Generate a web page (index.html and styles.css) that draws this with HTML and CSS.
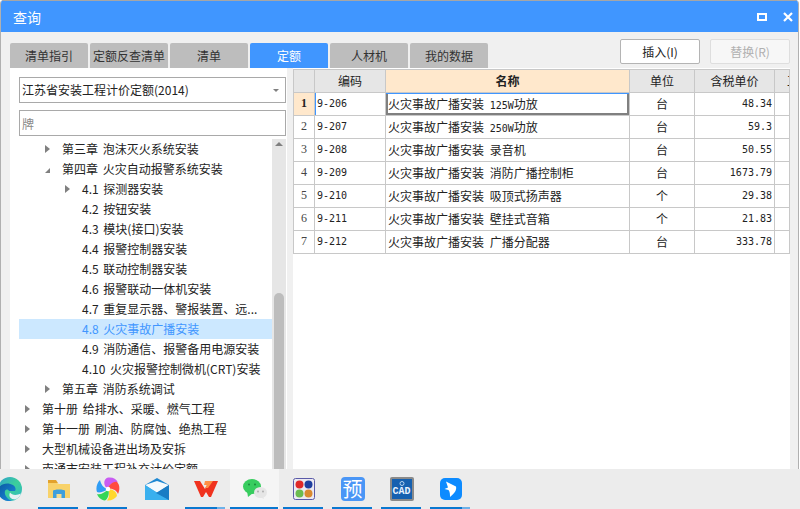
FILE: index.html
```html
<!DOCTYPE html>
<html lang="zh">
<head>
<meta charset="utf-8">
<title>查询</title>
<link rel="stylesheet" href="styles.css">
</head>
<body>
<div class="app">
  <div class="window">
    <header class="titlebar">
      <span class="title">查询</span>
      <div class="winbtns">
        <svg width="10" height="10" viewBox="0 0 10 10"><rect x="1" y="2" width="8" height="6" fill="none" stroke="#fff" stroke-width="2"/></svg>
        <svg width="10" height="10" viewBox="0 0 10 10"><path d="M1 1L9 9M9 1L1 9" stroke="#fff" stroke-width="2.200"/></svg>
      </div>
    </header>
    <main class="content">
      <div class="toprow">
        <nav class="tabs">
          <span class="tab">清单指引</span>
          <span class="tab">定额反查清单</span>
          <span class="tab">清单</span>
          <span class="tab active">定额</span>
          <span class="tab">人材机</span>
          <span class="tab">我的数据</span>
        </nav>
        <div class="actions">
          <button class="btn">插入(I)</button>
          <button class="btn disabled">替换(R)</button>
        </div>
      </div>
      <div class="panels">
        <section class="left">
          <div class="select"><span>江苏省安装工程计价定额(2014)</span><i class="caret"></i></div>
          <div class="search">牌</div>
          <div class="treewrap">
            <ul class="tree">
              <li class="l2"><i class="arr"></i>第三章 泡沫灭火系统安装</li>
              <li class="l2"><i class="arr open"></i>第四章 火灾自动报警系统安装</li>
              <li class="l3"><i class="arr"></i>4.1 探测器安装</li>
              <li class="l3">4.2 按钮安装</li>
              <li class="l3">4.3 模块(接口)安装</li>
              <li class="l3">4.4 报警控制器安装</li>
              <li class="l3">4.5 联动控制器安装</li>
              <li class="l3">4.6 报警联动一体机安装</li>
              <li class="l3">4.7 重复显示器、警报装置、远...</li>
              <li class="l3 sel">4.8 火灾事故广播安装</li>
              <li class="l3">4.9 消防通信、报警备用电源安装</li>
              <li class="l3">4.10 火灾报警控制微机(CRT)安装</li>
              <li class="l2"><i class="arr"></i>第五章 消防系统调试</li>
              <li class="l1"><i class="arr"></i>第十册 给排水、采暖、燃气工程</li>
              <li class="l1"><i class="arr"></i>第十一册 刷油、防腐蚀、绝热工程</li>
              <li class="l1"><i class="arr"></i>大型机械设备进出场及安拆</li>
              <li class="l1"><i class="arr"></i>南通市安装工程补充计价定额</li>
            </ul>
            <div class="scrollbar"><i class="up"></i><div class="thumb"></div></div>
          </div>
        </section>
        <section class="grid">
          <table>
            <colgroup><col class="c0"><col class="c1"><col class="c2"><col class="c3"><col class="c4"><col class="c5"></colgroup>
            <thead><tr><th></th><th>编码</th><th class="hl">名称</th><th>单位</th><th>含税单价</th><th class="cut">工</th></tr></thead>
            <tbody>
              <tr><td class="num cur">1</td><td class="code first">9-206</td><td class="name focus">火灾事故广播安装 <b>125W</b>功放</td><td class="unit">台</td><td class="price">48.34</td><td></td></tr>
              <tr><td class="num">2</td><td class="code">9-207</td><td class="name">火灾事故广播安装 <b>250W</b>功放</td><td class="unit">台</td><td class="price">59.3</td><td></td></tr>
              <tr><td class="num">3</td><td class="code">9-208</td><td class="name">火灾事故广播安装 录音机</td><td class="unit">台</td><td class="price">50.55</td><td></td></tr>
              <tr><td class="num">4</td><td class="code">9-209</td><td class="name">火灾事故广播安装 消防广播控制柜</td><td class="unit">台</td><td class="price">1673.79</td><td></td></tr>
              <tr><td class="num">5</td><td class="code">9-210</td><td class="name">火灾事故广播安装 吸顶式扬声器</td><td class="unit">个</td><td class="price">29.38</td><td></td></tr>
              <tr><td class="num">6</td><td class="code">9-211</td><td class="name">火灾事故广播安装 壁挂式音箱</td><td class="unit">个</td><td class="price">21.83</td><td></td></tr>
              <tr><td class="num">7</td><td class="code">9-212</td><td class="name">火灾事故广播安装 广播分配器</td><td class="unit">台</td><td class="price">333.78</td><td></td></tr>
            </tbody>
          </table>
        </section>
      </div>
    </main>
  </div>
  <footer class="taskbar">
    <div class="tb">
      <svg width="24" height="24" viewBox="0 0 24 24"><defs><linearGradient id="e1" x1="0" y1="0" x2="1" y2="1"><stop offset="0" stop-color="#2f9fd0"/><stop offset=".5" stop-color="#3ccf9a"/><stop offset="1" stop-color="#2fb5c8"/></linearGradient><linearGradient id="e2" x1="0" y1="0" x2="1" y2="1"><stop offset="0" stop-color="#0a5aa0"/><stop offset="1" stop-color="#1c8ae0"/></linearGradient></defs><circle cx="12" cy="12" r="12" fill="url(#e1)"/><path d="M0 13C2 6 10 5 15 8c3 2 3 5 2 6h-6c-1-2-3-2-4 0-1 4 2 8 7 10C5 25 0 20 0 13Z" fill="url(#e2)"/><path d="M12 15.500c2 3 7 3 11 1-1 3-3 5-6 6-4 0-7-3-5-7Z" fill="#e6f0f4"/></svg>
    </div>
    <div class="tb run">
      <svg width="22" height="18" viewBox="0 0 22 18"><path d="M0 3h9l2 1h11v14H0Z" fill="#f8d26a"/><path d="M0 0h8l2 3H0Z" fill="#e2a22c"/><path d="M5 11c0-2 12-2 12 0v7H5Z" fill="#3f9fdc"/><rect x="8.500" y="14" width="5" height="4" fill="#f8dc90"/></svg>
    </div>
    <div class="tb run">
      <svg width="24" height="24" viewBox="0 0 24 24"><g><path d="M12 12C7 9 7 2 12 .5c5-.5 8 1 10 5-4-1-8 1-10 6.500Z" fill="#c85cf2"/><path d="M12 12C13 7 18 4 21 5c3 3 3 8 1 12-1-3-5-6-10-5Z" fill="#ff4b3e"/><path d="M12 12c5 0 9 3 9 7-2 3-6 5-10 4.500 2-2 3-7 1-11.500Z" fill="#ffd72e"/><path d="M12 12c2 4 0 10-3 11.500C5 23 2 20 1 17c3 1 8-1 11-5Z" fill="#35d657"/><path d="M12 12C8 15 3 16 1 15-.5 11 1 6 4 3c1 4 3 8 8 9Z" fill="#2f9df5"/></g><circle cx="12" cy="12" r="2.300" fill="#fff"/></svg>
    </div>
    <div class="tb">
      <svg width="24" height="22" viewBox="0 0 24 22"><path d="M0 7L12 0l12 7v15H0Z" fill="#1e88d2"/><path d="M0 7l12 8L24 7 12 3Z" fill="#f4fafd"/><path d="M0 7v15h24Z" fill="#3ab0ee"/><path d="M24 7v15L11 15Z" fill="#1a7cc4"/></svg>
    </div>
    <div class="tb run split">
      <svg width="24" height="16" viewBox="0 0 24 16"><path d="M0 0h6l5 8L15 0h9l-7 16h-2l-3-5-3 5H7Z" fill="#f0321e"/><path d="M11 0h8l-5 7h-3l2-3h-3Z" fill="#ff8f45"/></svg>
    </div>
    <div class="tb run active">
      <svg width="24" height="20" viewBox="0 0 24 20"><ellipse cx="9" cy="7.500" rx="9" ry="7.500" fill="#38cd5f"/><path d="M4 12l1 6 5-4Z" fill="#38cd5f"/><circle cx="6" cy="5.500" r="1" fill="#1c8a3c"/><circle cx="12" cy="5.500" r="1" fill="#1c8a3c"/><ellipse cx="17.500" cy="13.500" rx="6.500" ry="5.500" fill="#e6e6e6"/><path d="M20 17l1 3-4-2Z" fill="#e6e6e6"/><circle cx="15" cy="12.500" r=".9" fill="#aaa"/><circle cx="20" cy="12.500" r=".9" fill="#aaa"/></svg>
    </div>
    <div class="tb run">
      <svg width="22" height="22" viewBox="0 0 22 22"><rect x=".5" y=".5" width="21" height="21" rx="2" fill="#eceaf2" stroke="#5a5aa8"/><circle cx="6.500" cy="6.500" r="4" fill="#e02828"/><circle cx="15.500" cy="6.500" r="4" fill="#1f3f9f"/><circle cx="6.500" cy="15.500" r="4" fill="#6cbb50"/><circle cx="15.500" cy="15.500" r="4" fill="#d98a30"/></svg>
    </div>
    <div class="tb run">
      <div class="ic">
        <svg width="24" height="24" viewBox="0 0 24 24"><rect width="24" height="24" rx="4" fill="#4a96f6"/></svg>
        <span class="yu">预</span>
      </div>
    </div>
    <div class="tb run">
      <div class="ic">
        <svg width="24" height="24" viewBox="0 0 24 24"><rect width="24" height="24" rx="2" fill="#8a8a8a"/><rect x="2" y="2" width="20" height="20" fill="#1560b0"/><circle cx="12" cy="6.500" r="2" fill="none" stroke="#b4d2ee"/></svg>
        <span class="cad">CAD</span>
      </div>
    </div>
    <div class="tb run split2">
      <svg width="22" height="22" viewBox="0 0 22 22"><rect width="22" height="22" rx="5" fill="#0d8bff"/><path d="M6 3.500l10 5c1 4-2 7-6 10.500 0-3 0-5-1.500-7L4.500 11 8 9.500Z" fill="#fff"/></svg>
    </div>
  </footer>
</div>
</body>
</html>
```
FILE: styles.css
```css
* { box-sizing: border-box; }
html, body { margin: 0; padding: 0; }
body { font-family: "Noto Sans CJK SC", "Noto Sans", sans-serif; font-size: 12px; color: #222; background: #fff; }
ul { margin: 0; padding: 0; list-style: none; }
.app { width: 800px; height: 509px; display: flex; flex-direction: column; overflow: hidden; }
.window { flex: 1; min-height: 0; width: 799px; display: flex; flex-direction: column; background: #f0f0f0; border-left: 1px solid #b0b0b0; border-right: 1px solid #b0b0b0; border-radius: 4px 4px 0 0; overflow: hidden; }
.titlebar { height: 32px; flex: none; background: #4096ff; border-top: 1px solid #a6a6a6; color: #fff; display: flex; align-items: center; justify-content: space-between; padding: 0 5px 0 12px; }
.title { font-size: 14px; }
.winbtns { display: flex; gap: 16px; }
.content { flex: 1; min-height: 0; overflow: hidden; padding: 11px 8px 0 9px; display: flex; flex-direction: column; }
.toprow { height: 25px; flex: none; display: flex; justify-content: space-between; position: relative; }
.tabs { display: flex; gap: 2px; align-self: flex-start; height: 25px; }
.tab { width: 78px; height: 25px; background: #bdbdbd; border-radius: 2px 2px 0 0; text-align: center; line-height: 25px; color: #333; white-space: nowrap; }
.tab.active { background: #4096ff; color: #fff; }
.actions { display: flex; gap: 10px; margin-top: -4px; height: 25px; }
.btn { width: 80px; height: 25px; background: #fff; border: 1px solid #b4b4b4; border-radius: 2px; font: inherit; word-spacing: 2px; color: #222; padding: 0; }
.btn.disabled { border-color: #dedede; color: #b0b0b0; background: #f7f7f7; }
.panels { flex: 1; min-height: 0; display: flex; gap: 6px; }
.left { width: 277px; flex: none; background: #fff; padding: 9px 0 0 9px; display: flex; flex-direction: column; word-spacing: 2px; }
.select { width: 267px; height: 26px; border: 1px solid #a9a9a9; display: flex; align-items: center; justify-content: space-between; padding: 0 6px 2px 2px; flex: none; }
.caret { width: 0; height: 0; border: 3px solid transparent; border-top: 3px solid #808080; border-bottom: 0; margin-top: 2px; }
.search { width: 267px; height: 26px; border: 1px solid #a9a9a9; margin-top: 7px; line-height: 25px; padding-left: 2px; color: #8a8a8a; flex: none; }
.treewrap { width: 267px; flex: none; height: 334px; margin-top: 3px; position: relative; padding-right: 14px; overflow: hidden; }
.tree li { height: 20px; line-height: 20px; white-space: nowrap; position: relative; }
.l1 { padding-left: 23px; }
.l2 { padding-left: 43px; }
.l3 { padding-left: 63px; }
.sel { background: #cce8ff; color: #4096ff; }
.arr { position: absolute; top: 6px; width: 0; height: 0; border: 4px solid transparent; border-left: 5px solid #808080; border-right: 0; margin-left: -17px; }
.arr.open { border: 0; width: 0; height: 0; top: 9px; border-left: 5px solid transparent; border-bottom: 5px solid #808080; }
.scrollbar { position: absolute; right: 0; top: 0; bottom: 0; width: 14px; background: #e6e6e6; }
.up { position: absolute; left: 3px; top: 3px; width: 0; height: 0; border: 4px solid transparent; border-top: 0; border-bottom: 4px solid #808080; }
.thumb { position: absolute; left: 2px; width: 10px; top: 154px; bottom: 0; background: #bdbdbd; border-radius: 5px 5px 0 0; }
.grid { flex: none; width: 497px; overflow: hidden; background: #fff; padding-top: 1px; }
table { table-layout: fixed; border-collapse: collapse; width: 496px; }
.c0 { width: 21px; }
.c1 { width: 71px; }
.c2 { width: 244px; }
.c3 { width: 65px; }
.c4 { width: 80px; }
.c5 { width: 15px; }
th { height: 23px; background: #e6e6e6; border: 1px solid #c8c8c8; font-weight: 400; padding: 0 0 2px; overflow: hidden; }
th.hl { background: #ffe8cc; font-weight: 700; }
th.cut { text-align: left; padding-left: 12px; white-space: nowrap; }
td { height: 23px; border: 1px solid #c8c8c8; padding: 0 2px 2px; white-space: nowrap; overflow: hidden; }
td.num { text-align: center; font-family: "Liberation Serif", serif; color: #444; }
td.cur { background: #ffe8cc; font-weight: 700; color: #222; }
td.code, td.price, td b { font-family: "DejaVu Sans Mono", monospace; font-size: 10px; font-weight: 400; }
td.name { word-spacing: 3px; }
td.code.first { box-shadow: inset 1px 0 0 #4096ff; }
td.name.focus { box-shadow: inset 0 1px 0 #4096ff, inset 2px 0 0 #808080, inset -2px 0 0 #808080, inset 0 -2px 0 #808080; }
td.unit { text-align: center; }
td.price { text-align: right; }
.taskbar { height: 40px; flex: none; background: #ececec; display: flex; margin-left: -15px; }
.tb { width: 49px; height: 40px; flex: none; display: flex; align-items: center; justify-content: center; position: relative; }
.tb.run::after { content: ""; position: absolute; bottom: 0; left: 4px; right: 5px; height: 2px; background: #0a78d0; }
.tb.split::before, .tb.split2::before { content: ""; position: absolute; bottom: 0; right: 5px; width: 8px; height: 2px; background: #6db1e8; z-index: 1; }
.tb.active { background: #f5f5f5; }
.tb.active::after { left: 0; right: 1px; }
.ic { position: relative; width: 24px; height: 24px; }
.ic svg { display: block; }
.yu { position: absolute; inset: 0; text-align: center; color: #fff; font-size: 20px; line-height: 24px; }
.cad { position: absolute; left: 0; right: 0; top: 10px; text-align: center; color: #e8f2ff; font-family: "Liberation Mono", monospace; font-weight: 700; font-size: 10px; line-height: 10px; }
```
